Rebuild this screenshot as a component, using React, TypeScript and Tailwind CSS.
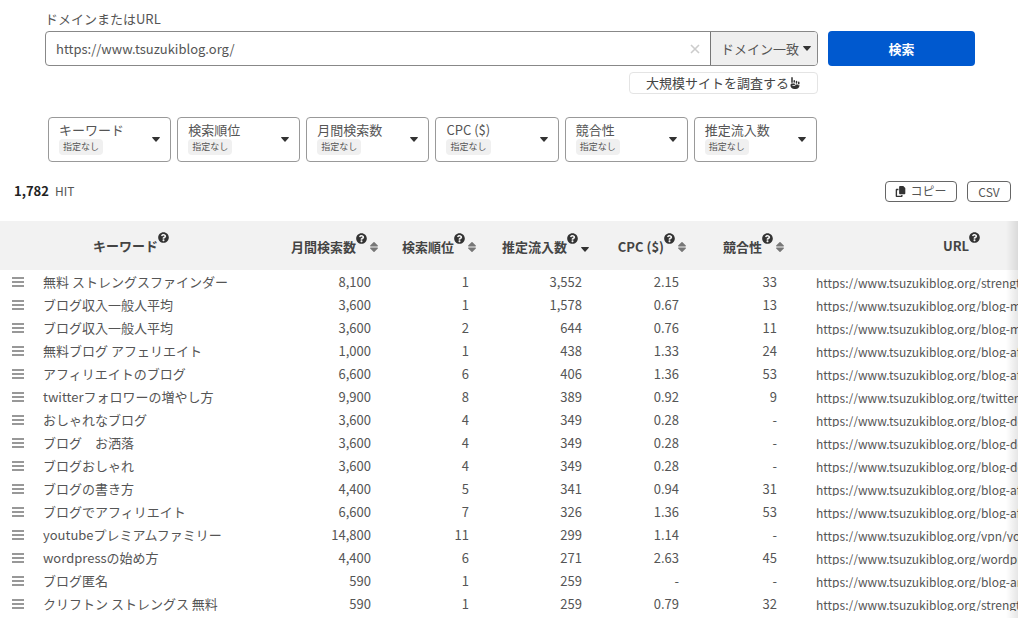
import { FaQuestionCircle } from "react-icons/fa";
import { FaCopy, FaHandPointUp } from "react-icons/fa6";

const filters = ["キーワード", "検索順位", "月間検索数", "CPC ($)", "競合性", "推定流入数"];

const rows: string[][] = [
  ["無料 ストレングスファインダー", "8,100", "1", "3,552", "2.15", "33", "strengthsfinder/"],
  ["ブログ収入一般人平均", "3,600", "1", "1,578", "0.67", "13", "blog-make-money/"],
  ["ブログ収入一般人平均", "3,600", "2", "644", "0.76", "11", "blog-make-money/"],
  ["無料ブログ アフェリエイト", "1,000", "1", "438", "1.33", "24", "blog-affiliate/"],
  ["アフィリエイトのブログ", "6,600", "6", "406", "1.36", "53", "blog-affiliate/"],
  ["twitterフォロワーの増やし方", "9,900", "8", "389", "0.92", "9", "twitter-follower/"],
  ["おしゃれなブログ", "3,600", "4", "349", "0.28", "-", "blog-design/"],
  ["ブログ　お洒落", "3,600", "4", "349", "0.28", "-", "blog-design/"],
  ["ブログおしゃれ", "3,600", "4", "349", "0.28", "-", "blog-design/"],
  ["ブログの書き方", "4,400", "5", "341", "0.94", "31", "blog-affiliate/"],
  ["ブログでアフィリエイト", "6,600", "7", "326", "1.36", "53", "blog-affiliate/"],
  ["youtubeプレミアムファミリー", "14,800", "11", "299", "1.14", "-", "vpn/youtube/"],
  ["wordpressの始め方", "4,400", "6", "271", "2.63", "45", "wordpress/"],
  ["ブログ匿名", "590", "1", "259", "-", "-", "blog-anonymous/"],
  ["クリフトン ストレングス 無料", "590", "1", "259", "0.79", "32", "strengthsfinder/"],
];

function Caret() {
  return (
    <svg viewBox="0 0 8 5" className="h-[5px] w-2 shrink-0" fill="#333" aria-hidden="true">
      <path d="M.6 0h6.8c.5 0 .7.5.4.8L4.5 4.6a.7.7 0 0 1-1 0L.2.8C-.1.5.1 0 .6 0z" />
    </svg>
  );
}

function SortIcon() {
  return (
    <svg viewBox="0 0 8 10" className="h-[10px] w-2 shrink-0" fill="#777" aria-hidden="true">
      <path d="M.6 4.4h6.8c.5 0 .7-.5.4-.8L4.5.3a.7.7 0 0 0-1 0L.2 3.6c-.3.3-.1.8.4.8zM.6 5.6h6.8c.5 0 .7.5.4.8L4.5 9.7a.7.7 0 0 1-1 0L.2 6.4c-.3-.3-.1-.8.4-.8z" />
    </svg>
  );
}

function Heading({ label, sort }: { label: string; sort?: "both" | "down" }) {
  const text = (
    <span className="flex items-start">
      {label}
      <FaQuestionCircle className="-mt-1 size-[11px] text-[#333]" />
    </span>
  );
  if (!sort) return <div className="flex justify-center pr-2">{text}</div>;
  return (
    <button type="button" className="ml-auto flex items-center gap-[3px] pt-[3px] pr-[2px] font-bold">
      {text}
      {sort === "both" ? <SortIcon /> : <span className="pt-1"><Caret /></span>}
    </button>
  );
}

export default function App() {
  return (
    <main className="relative h-screen overflow-hidden bg-white font-['Noto_Sans_CJK_JP',sans-serif] text-[13px] leading-5 text-[#555]">
      <form className="pt-[9px] pr-[43px] pl-[45px]" onSubmit={(e) => e.preventDefault()}>
        <label htmlFor="domain">ドメインまたはURL</label>
        <div className="mt-[2px] flex gap-[10px]">
          <div className="flex h-[35px] grow rounded border border-[#888]">
            <input id="domain" type="text" defaultValue="https://www.tsuzukiblog.org/" className="min-w-0 grow px-[10px] outline-none" />
            <button type="button" aria-label="クリア" className="flex w-[30px] items-center justify-center text-[#ccc]">
              <svg viewBox="0 0 10 10" className="size-[10px]" stroke="currentColor" strokeWidth="1.6"><path d="M1 1l8 8M9 1l-8 8" /></svg>
            </button>
            <button type="button" className="flex w-[107px] items-center justify-end gap-1 rounded-r-[3px] border-l border-[#777] bg-[#efefef] pr-[6px]">
              ドメイン一致
              <Caret />
            </button>
          </div>
          <button type="submit" className="h-[35px] w-[147px] rounded bg-[#0059cf] font-bold text-white">検索</button>
        </div>
        <div className="mt-[6px] flex justify-end pr-[157px]">
          <button type="button" className="flex h-[22px] w-[189px] items-center justify-center rounded border border-[#e4e4e4] text-[#444]">
            大規模サイトを調査する
            <FaHandPointUp className="size-3 text-[#333]" />
          </button>
        </div>
      </form>

      <div className="mt-[23px] grid grid-cols-6 gap-[6px] pr-[201px] pl-12">
        {filters.map((name) => (
          <button key={name} type="button" className="flex h-[45px] items-center justify-between rounded border border-[#999] px-[10px] text-left">
            <span className="flex flex-col items-start pb-[3px]">
              <span className="leading-[18px]">{name}</span>
              <span className="rounded bg-[#f0f0f0] px-1 text-[9px] leading-4">指定なし</span>
            </span>
            <Caret />
          </button>
        ))}
      </div>

      <div className="mt-[18px] flex h-[22px] items-center justify-between pr-[7px] pl-[14px]">
        <p><b className="mr-[6px] font-bold text-[#222]">1,782</b><span className="text-xs">HIT</span></p>
        <div className="flex gap-[10px] text-xs">
          <button type="button" className="flex h-[21px] w-[72px] items-center justify-center gap-1 rounded border border-[#666]">
            <FaCopy className="size-[11px] text-[#333]" />
            コピー
          </button>
          <button type="button" className="h-[21px] w-[44px] rounded border border-[#666] leading-5">CSV</button>
        </div>
      </div>

      <table className="mt-[19px] w-[1145px] table-fixed border-collapse">
        <colgroup>
          <col className="w-[43px]" />
          <col className="w-[227px]" />
          <col className="w-[110px]" />
          <col className="w-[98px]" />
          <col className="w-[113px]" />
          <col className="w-[97px]" />
          <col className="w-[98px]" />
          <col />
        </colgroup>
        <thead className="bg-[#f2f2f2] text-[#444]">
          <tr className="h-[49px]">
            <th colSpan={2} className="p-0"><Heading label="キーワード" /></th>
            <th className="p-0"><Heading label="月間検索数" sort="both" /></th>
            <th className="p-0"><Heading label="検索順位" sort="both" /></th>
            <th className="p-0"><Heading label="推定流入数" sort="down" /></th>
            <th className="p-0"><Heading label="CPC ($)" sort="both" /></th>
            <th className="p-0"><Heading label="競合性" sort="both" /></th>
            <th className="p-0"><Heading label="URL" /></th>
          </tr>
        </thead>
        <tbody>
          {rows.map((row, i) => (
            <tr key={i} className="h-[23px]">
              <td className="p-0 pl-3">
                <button type="button" aria-label="メニュー" className="block">
                  <svg viewBox="0 0 12 10" className="h-[10px] w-3" stroke="#777" strokeWidth="1.4"><path d="M0 1h12M0 5h12M0 9h12" /></svg>
                </button>
              </td>
              <td className="p-0 whitespace-nowrap">{row[0]}</td>
              {row.slice(1, 6).map((v, j) => (
                <td key={j} className="p-0 pr-[9px] text-right">{v}</td>
              ))}
              <td className="p-0 pl-[30px] text-xs">
                <a href={"https://www.tsuzukiblog.org/" + row[6]} className="block h-[15px] overflow-hidden leading-[18px] whitespace-nowrap">
                  {"https://www.tsuzukiblog.org/" + row[6]}
                </a>
              </td>
            </tr>
          ))}
        </tbody>
      </table>
      <div className="pointer-events-none absolute right-0 bottom-0 h-[397px] w-3 bg-linear-to-r from-transparent to-black/10" />
    </main>
  );
}
